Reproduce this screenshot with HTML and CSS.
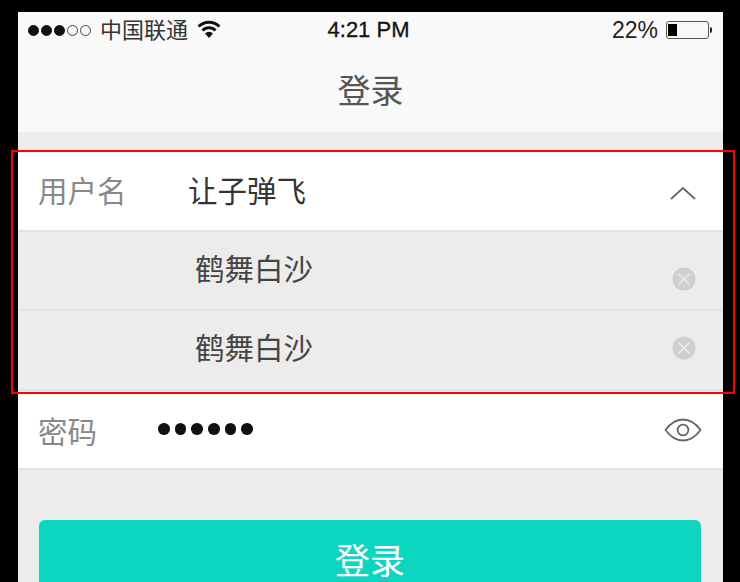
FILE: index.html
```html
<!DOCTYPE html>
<html>
    <head>
        <meta charset="utf-8">
        <title>登录</title>
        <link rel="stylesheet" href="styles.css">
    </head>
    <body>
        <div class="phone">
            <div class="status">
                <div class="status-left">
                    <span class="dot on"></span><span class="dot on"></span><span class="dot on"></span><span class="dot"></span><span class="dot"></span>
                    <span class="carrier">中国联通</span>
                    <svg class="wifi" width="24" height="20" viewBox="0 0 24 20">
                        <path d="M1.5 7.5 A15 15 0 0 1 22.5 7.5" fill="none" stroke="#111" stroke-width="3"/>
                        <path d="M5.5 11.5 A9 9 0 0 1 18.5 11.5" fill="none" stroke="#111" stroke-width="3"/>
                        <path d="M8 14.5 A5.5 5.5 0 0 1 16 14.5 L12 19 Z" fill="#111"/>
                    </svg>
                </div>
                <div class="time">4:21 PM</div>
                <div class="status-right">
                    <span class="percent">22%</span>
                    <span class="battery"><span class="level"></span></span>
                    <span class="cap"></span>
                </div>
            </div>
            <div class="title">登录</div>
            <div class="form">
                <div class="row user-row">
                    <span class="label">用户名</span>
                    <span class="user-name">让子弹飞</span>
                    <svg class="chevron" width="26" height="14" viewBox="0 0 26 14">
                        <path d="M1 13 L13 2 L25 13" fill="none" stroke="#666" stroke-width="1.8"/>
                    </svg>
                </div>
                <div class="row option first">
                    <span class="option-name">鹤舞白沙</span>
                    <svg class="clear" width="24" height="24" viewBox="0 0 24 24">
                        <circle cx="12" cy="12" r="11.5" fill="#cfcfcf"/>
                        <path d="M6.5 6.5 L17.5 17.5 M17.5 6.5 L6.5 17.5" stroke="#eee" stroke-width="1.4"/>
                    </svg>
                </div>
                <div class="row option second">
                    <span class="option-name">鹤舞白沙</span>
                    <svg class="clear" width="24" height="24" viewBox="0 0 24 24">
                        <circle cx="12" cy="12" r="11.5" fill="#cfcfcf"/>
                        <path d="M6.5 6.5 L17.5 17.5 M17.5 6.5 L6.5 17.5" stroke="#eee" stroke-width="1.4"/>
                    </svg>
                </div>
                <div class="row pass-row">
                    <span class="label pass-label">密码</span>
                    <span class="dots"><i></i><i></i><i></i><i></i><i></i><i></i></span>
                    <svg class="eye" width="38" height="24" viewBox="0 0 38 24">
                        <path d="M1.5 12 C8 3 14 1.5 19 1.5 C24 1.5 30 3 36.5 12 C30 21 24 22.5 19 22.5 C14 22.5 8 21 1.5 12 Z" fill="none" stroke="#666" stroke-width="1.8"/>
                        <circle cx="19" cy="12" r="5.4" fill="none" stroke="#666" stroke-width="1.8"/>
                    </svg>
                </div>
            </div>
            <div class="actions">
                <div class="login-btn">登录</div>
            </div>
        </div>
        <div class="highlight"></div>
    </body>
</html>
```

FILE: styles.css
```css
html, body {
    margin: 0;
    height: 100%;
}

body {
    background-color: #000;
    overflow: hidden;
    font-family: "Liberation Sans", "Noto Sans CJK SC", sans-serif;
    position: relative;
}

.phone {
    width: 705px;
    height: 570px;
    margin: 12px 0 0 18px;
    background-color: #ececec;
    overflow: hidden;
}

.status {
    height: 36px;
    background-color: #f9f9f9;
    display: flex;
    justify-content: space-between;
    align-items: center;
    padding: 0 11px 0 10px;
    color: #222;
}

.status-left {
    width: 240px;
    display: flex;
    align-items: center;
}

.dot {
    width: 11px;
    height: 11px;
    margin-right: 2px;
    border-radius: 50%;
    border: 1px solid #444;
    box-sizing: border-box;
}

.dot.on {
    background-color: #111;
    border-color: #111;
}

.carrier {
    margin-left: 7px;
    margin-bottom: 4px;
    font-size: 22px;
    color: #333;
}

.wifi {
    margin-left: 9px;
    margin-bottom: 2px;
}

.time {
    font-size: 22px;
    color: #111;
    margin-left: -3px;
    -webkit-text-stroke: 0.3px #111;
}

.status-right {
    width: 240px;
    display: flex;
    justify-content: flex-end;
    align-items: center;
}

.percent {
    font-size: 23px;
    color: #222;
}

.battery {
    width: 43px;
    height: 18px;
    margin-left: 8px;
    border: 1px solid #555;
    border-radius: 3px;
    padding: 2px 1px;
    display: block;
    box-sizing: border-box;
}

.level {
    display: block;
    width: 9px;
    height: 100%;
    background-color: #000;
}

.cap {
    width: 2px;
    height: 6px;
    margin-left: 1px;
    background-color: #222;
    border-radius: 0 2px 2px 0;
}

.title {
    height: 84px;
    background-color: #f9f9f9;
    text-align: center;
    font-size: 33px;
    line-height: 88px;
    color: #555;
}

.form {
    margin-top: 19px;
}

.row {
    display: flex;
    align-items: center;
    box-sizing: border-box;
    padding-left: 20px;
    padding-right: 27px;
    border-bottom: 2px solid #e2e2e2;
}

.user-row {
    height: 81px;
    background-color: #fff;
}

.label {
    width: 150px;
    font-size: 29.5px;
    color: #888;
    margin-bottom: 3px;
}

.user-name {
    flex: 1;
    font-size: 29.5px;
    color: #333;
    margin-bottom: 3px;
}

.chevron {
    margin-top: 4px;
}

.option {
    height: 79px;
    background-color: #ececec;
    padding-left: 177px;
}

.option.second {
    height: 80px;
}

.option-name {
    flex: 1;
    font-size: 29.5px;
    color: #444;
    margin-bottom: 7px;
}

.second .option-name {
    margin-bottom: 9px;
}

.first .clear {
    margin-top: 16px;
}

.second .clear {
    margin-top: -5px;
}

.pass-row {
    height: 79px;
    background-color: #fff;
    padding-right: 21px;
}

.pass-label {
    width: 120px;
    margin-bottom: -1px;
}

.dots {
    flex: 1;
    display: flex;
    gap: 5.2px;
    margin-bottom: 1px;
}

.dots i {
    width: 11.5px;
    height: 11.5px;
    border-radius: 50%;
    background-color: #111;
}

.actions {
    padding: 50px 22px 0 21px;
}

.login-btn {
    height: 90px;
    background-color: #0dd6c0;
    border-radius: 6px;
    color: #fff;
    font-size: 35px;
    text-align: center;
    line-height: 84px;
}

.highlight {
    position: absolute;
    left: 11px;
    top: 150px;
    width: 724px;
    height: 244px;
    box-sizing: border-box;
    border: 2px solid #f00;
}
```
